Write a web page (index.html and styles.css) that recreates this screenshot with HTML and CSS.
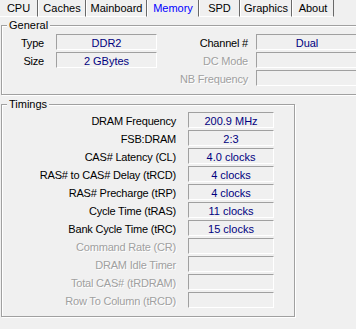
FILE: index.html
```html
<!DOCTYPE html>
<html lang="en">

<head>
  <meta charset="UTF-8">
  <meta name="viewport" content="width=device-width, initial-scale=1.0">
  <title>CPU-Z Memory</title>
  <link rel="stylesheet" href="styles.css">
</head>

<body>
  <div class="window">
    <div class="tabs">
      <span class="tab tab-cpu">CPU</span>
      <span class="tab tab-caches">Caches</span>
      <span class="tab tab-mainboard">Mainboard</span>
      <span class="tab tab-memory active">Memory</span>
      <span class="tab tab-spd">SPD</span>
      <span class="tab tab-graphics">Graphics</span>
      <span class="tab tab-about">About</span>
    </div>

    <div class="group general">
      <span class="group-title">General</span>
      <div class="general-body">
        <div class="col col-left">
          <div class="row">
            <span class="label">Type</span>
            <span class="field">DDR2</span>
          </div>
          <div class="row">
            <span class="label">Size</span>
            <span class="field">2 GBytes</span>
          </div>
        </div>
        <div class="col col-right">
          <div class="row">
            <span class="label">Channel #</span>
            <span class="field">Dual</span>
          </div>
          <div class="row">
            <span class="label disabled">DC Mode</span>
            <span class="field"></span>
          </div>
          <div class="row">
            <span class="label disabled">NB Frequency</span>
            <span class="field"></span>
          </div>
        </div>
      </div>
    </div>

    <div class="group timings">
      <span class="group-title">Timings</span>
      <div class="col timings-body">
        <div class="row">
          <span class="label">DRAM Frequency</span>
          <span class="field">200.9 MHz</span>
        </div>
        <div class="row">
          <span class="label">FSB:DRAM</span>
          <span class="field">2:3</span>
        </div>
        <div class="row">
          <span class="label">CAS# Latency (CL)</span>
          <span class="field">4.0 clocks</span>
        </div>
        <div class="row">
          <span class="label">RAS# to CAS# Delay (tRCD)</span>
          <span class="field">4 clocks</span>
        </div>
        <div class="row">
          <span class="label">RAS# Precharge (tRP)</span>
          <span class="field">4 clocks</span>
        </div>
        <div class="row">
          <span class="label">Cycle Time (tRAS)</span>
          <span class="field">11 clocks</span>
        </div>
        <div class="row">
          <span class="label">Bank Cycle Time (tRC)</span>
          <span class="field">15 clocks</span>
        </div>
        <div class="row">
          <span class="label disabled">Command Rate (CR)</span>
          <span class="field"></span>
        </div>
        <div class="row">
          <span class="label disabled">DRAM Idle Timer</span>
          <span class="field"></span>
        </div>
        <div class="row">
          <span class="label disabled">Total CAS# (tRDRAM)</span>
          <span class="field"></span>
        </div>
        <div class="row">
          <span class="label disabled">Row To Column (tRCD)</span>
          <span class="field"></span>
        </div>
      </div>
    </div>
  </div>
</body>

</html>
```

FILE: styles.css
```css
* {
  box-sizing: border-box;
}

body {
  margin: 0;
  background: #f0f0f0;
  color: #000;
  font-family: "Liberation Sans", Arial, sans-serif;
  font-size: 11px;
  width: 356px;
  height: 329px;
  overflow: hidden;
}

.window {
  width: 356px;
  height: 329px;
  overflow: hidden;
}

/* tab strip */
.tabs {
  display: flex;
  height: 17px;
}

.tab {
  height: 17px;
  line-height: 16px;
  text-align: center;
  border-left: 1px solid #fff;
  border-right: 1px solid #696969;
  border-bottom: 1px solid #fff;
  flex: none;
}

.tab.active {
  color: #0000ff;
  border-bottom-color: #f0f0f0;
}

.tab-cpu {
  width: 38px;
  border-left: none;
}

.tab-caches {
  width: 48px;
}

.tab-mainboard {
  width: 61px;
}

.tab-memory {
  width: 52px;
}

.tab-spd {
  width: 41px;
}

.tab-graphics {
  width: 52px;
}

.tab-about {
  width: 42px;
}

/* group boxes */
.group {
  border: 1px solid #a0a0a0;
  box-shadow: inset 1px 1px 0 #fff, 1px 1px 0 #fff;
  margin-left: 1px;
}

.group-title {
  display: block;
  width: max-content;
  height: 13px;
  line-height: 13px;
  margin: -7px 0 0 5px;
  padding: 0 2px;
  background: #f0f0f0;
}

.general {
  width: 400px;
  margin-top: 8px;
  padding-bottom: 8px;
}

.general-body {
  display: flex;
  margin-top: 2px;
}

.timings {
  width: 294px;
  margin-top: 9px;
  padding-bottom: 8px;
}

.timings-body {
  margin-top: 1px;
}

.col {
  display: flex;
  flex-direction: column;
  gap: 2px;
}

.row {
  display: flex;
  height: 16px;
}

.label {
  height: 16px;
  padding-top: 3px;
  line-height: 12px;
  text-align: right;
  white-space: nowrap;
  letter-spacing: -0.2px;
}

.label.disabled {
  color: #a0a0a0;
  text-shadow: 1px 1px 0 #fff;
}

.field {
  height: 16px;
  padding-top: 2px;
  line-height: 12px;
  text-align: center;
  color: #000080;
  border-top: 1px solid #a0a0a0;
  border-left: 1px solid #a0a0a0;
  border-bottom: 1px solid #fff;
  border-right: 1px solid #fff;
  white-space: nowrap;
}

.col-left .label {
  width: 42px;
  margin-right: 12px;
}

.col-left .field {
  width: 101px;
}

.col-right .label {
  width: 91px;
  margin-right: 8px;
}

.col-right .field {
  width: 102px;
}

.timings .label {
  width: 174px;
  margin-right: 12px;
}

.timings .field {
  width: 86px;
}
```
